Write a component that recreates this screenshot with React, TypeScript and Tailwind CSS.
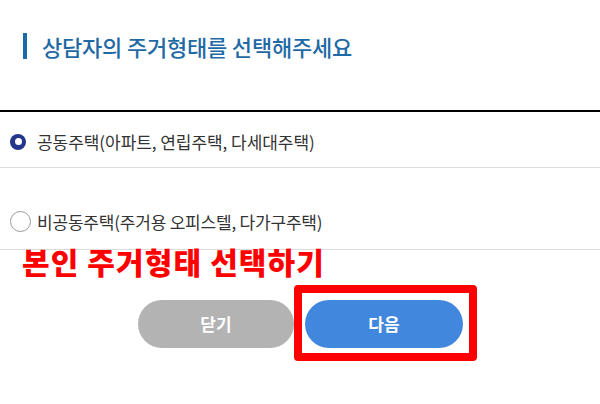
import React from "react";

const font = { fontFamily: '"Noto Sans CJK KR", "Noto Sans", sans-serif' };

export default function App() {
  return (
    <div
      className="relative w-[600px] h-[404px] bg-white overflow-hidden"
      style={font}
    >
      {/* Title */}
      <div className="flex items-center pt-[33px] pl-[23px]">
        <div className="w-[4px] h-[26px] bg-[#1a6aa8]" />
        <div className="ml-[15px] text-[22px] leading-[26px] font-medium text-[#1f6aa5] tracking-[-0.2px]">
          상담자의 주거형태를 선택해주세요
        </div>
      </div>

      <div className="mt-[51px] h-[2px] bg-black" />

      {/* Row 1 */}
      <div className="flex items-center h-[56px] pt-[4px] pl-[10px] border-b border-[#dddddd]">
        <span className="flex items-center justify-center w-[16px] h-[16px] rounded-full bg-[#22378a]">
          <span className="w-[7px] h-[7px] rounded-full bg-white" />
        </span>
        <span className="ml-[11px] text-[17px] leading-[20px] text-[#333333] tracking-[-0.05px]">
          공동주택(아파트, 연립주택, 다세대주택)
        </span>
      </div>

      {/* Row 2 */}
      <div className="flex items-start h-[82px] pt-[43px] pl-[10px] border-b border-[#dddddd]">
        <span className="w-[21px] h-[21px] rounded-full border border-[#9a9a9a] bg-white" />
        <span className="ml-[6px] text-[17px] leading-[21px] text-[#333333] tracking-[-0.2px]">
          비공동주택(주거용 오피스텔, 다가구주택)
        </span>
      </div>

      {/* Buttons */}
      <div className="flex justify-center gap-[11px] mt-[50px] pl-[1px]">
        <button className="w-[156px] h-[48px] rounded-full bg-[#b3b3b3] text-white text-[17px] font-bold">
          닫기
        </button>
        <button className="w-[158px] h-[48px] rounded-full bg-[#4187de] text-white text-[17px] font-bold">
          다음
        </button>
      </div>

      {/* Annotations */}
      <div className="absolute left-[22px] top-[241px] text-[30px] leading-[40px] font-black text-[#ff0000] tracking-[1.1px]">
        본인 주거형태 선택하기
      </div>
      <div className="absolute left-[294px] top-[285px] w-[183px] h-[76px] border-[8px] border-[#ff0000] rounded-[4px]" />
    </div>
  );
}
